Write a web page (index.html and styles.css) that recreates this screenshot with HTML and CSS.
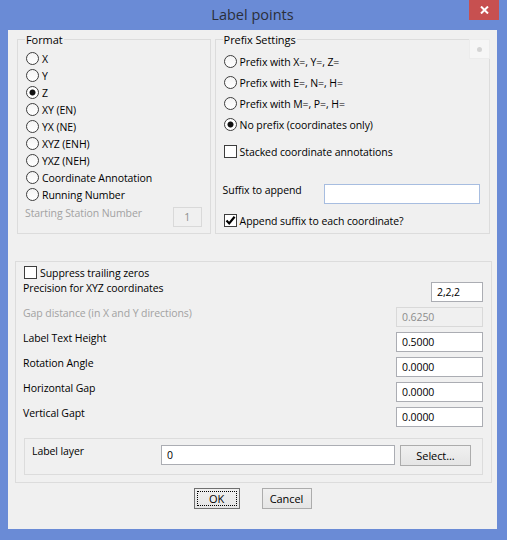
FILE: index.html
```html
<!DOCTYPE html>
<html>
<head>
<meta charset="utf-8">
<title>Label points</title>
<link rel="stylesheet" href="styles.css">
</head>
<body>
<div class="window">
  <div class="titlebar">
    <span></span>
    <span class="title">Label points</span>
    <span class="close"><svg width="9" height="8" viewBox="0 0 9 8"><path d="M1 0.5 L8 7.5 M8 0.5 L1 7.5" stroke="#fff" stroke-width="2"/></svg></span>
  </div>
  <div class="client">
    <div class="toprow">
      <div class="group format">
        <div class="legend">Format</div>
        <div class="radios">
          <div class="radio"><span class="rb"></span>X</div>
          <div class="radio"><span class="rb"></span>Y</div>
          <div class="radio"><span class="rb on"></span>Z</div>
          <div class="radio"><span class="rb"></span>XY (EN)</div>
          <div class="radio"><span class="rb"></span>YX (NE)</div>
          <div class="radio"><span class="rb"></span>XYZ (ENH)</div>
          <div class="radio"><span class="rb"></span>YXZ (NEH)</div>
          <div class="radio"><span class="rb"></span>Coordinate Annotation</div>
          <div class="radio"><span class="rb"></span>Running Number</div>
        </div>
        <div class="station">
          <span class="lbl dis">Starting Station Number</span>
          <span class="input disabled station-input">1</span>
        </div>
      </div>
      <div class="group prefix">
        <div class="legend">Prefix Settings</div>
        <span class="corner"><span class="dot"></span></span>
        <div class="radios wide">
          <div class="radio"><span class="rb"></span>Prefix with X=, Y=, Z=</div>
          <div class="radio"><span class="rb"></span>Prefix with E=, N=, H=</div>
          <div class="radio"><span class="rb"></span>Prefix with M=, P=, H=</div>
          <div class="radio"><span class="rb on"></span>No prefix (coordinates only)</div>
        </div>
        <div class="check stacked"><span class="cb"></span>Stacked coordinate annotations</div>
        <div class="suffix">
          <span class="lbl">Suffix to append</span>
          <span class="input focus-input suffix-input"></span>
        </div>
        <div class="check append"><span class="cb"><svg width="11" height="11" viewBox="0 0 11 11"><path d="M1.5 5.5 L4.2 8.4 L9.6 1.8" fill="none" stroke="#000" stroke-width="2.2"/></svg></span>Append suffix to each coordinate?</div>
      </div>
    </div>

    <div class="group params">
      <div class="check suppress"><span class="cb"></span>Suppress trailing zeros</div>
      <div class="rows">
        <span class="lbl">Precision for XYZ coordinates</span>
        <span class="input narrow">2,2,2</span>
        <span class="lbl dis">Gap distance (in X and Y directions)</span>
        <span class="input disabled">0.6250</span>
        <span class="lbl">Label Text Height</span>
        <span class="input">0.5000</span>
        <span class="lbl">Rotation Angle</span>
        <span class="input">0.0000</span>
        <span class="lbl">Horizontal Gap</span>
        <span class="input">0.0000</span>
        <span class="lbl">Vertical Gapt</span>
        <span class="input">0.0000</span>
      </div>
      <div class="layerbox">
        <span class="lbl">Label layer</span>
        <span class="input">0</span>
        <span class="btn select">Select...</span>
      </div>
    </div>

    <div class="buttons">
      <span class="btn ok"><span class="focusring">OK</span></span>
      <span class="btn cancel">Cancel</span>
    </div>
  </div>
</div>
</body>
</html>
```

FILE: styles.css
```css
* { box-sizing: border-box; }

html, body {
  margin: 0;
  padding: 0;
  background: #6a8bd6;
}

body {
  font-family: "Open Sans", "Noto Sans", sans-serif;
  font-size: 10.5px;
  letter-spacing: -0.08px;
  color: #000;
}

.window {
  width: 507px;
  height: 540px;
  background: #6a8bd6;
  padding: 0 10px 11px 8px;
  display: flex;
  flex-direction: column;
}

.titlebar {
  height: 30px;
  flex: none;
  display: grid;
  grid-template-columns: 1fr auto 1fr;
  align-items: center;
}

.title {
  font-size: 14.5px;
  letter-spacing: 0;
  color: #2a2f3a;
  line-height: 30px;
}

.close {
  justify-self: end;
  align-self: start;
  width: 30px;
  height: 20px;
  margin-right: -2px;
  background: #c75050;
  display: flex;
  align-items: center;
  justify-content: center;
}

.close svg { display: block; }

.client {
  flex: 1;
  background: #f0f0f0;
  padding: 9px 7px 0 7px;
  display: flex;
  flex-direction: column;
}

.toprow {
  display: flex;
  gap: 4px;
  margin-left: 2px;
}

.group {
  border: 1px solid #dcdcdc;
  position: relative;
}

.legend {
  height: 16px;
  line-height: 16px;
  margin-top: -8px;
  margin-left: -1px;
  padding: 0 1px;
  width: fit-content;
  background: #f0f0f0;
  font-size: 11px;
}

.format {
  width: 194px;
  height: 195px;
  padding: 0 8px;
}

.prefix {
  width: 276px;
  height: 195px;
  padding: 0 9px 0 8px;
}

.radios {
  margin-top: 2px;
  display: flex;
  flex-direction: column;
}

.radios.wide { margin-top: 3px; }

.radio, .check {
  display: flex;
  align-items: center;
  height: 17px;
  white-space: nowrap;
}

.radios.wide .radio { height: 21px; }

.rb {
  width: 13px;
  height: 13px;
  border: 1px solid #3d3d3d;
  border-radius: 50%;
  background: linear-gradient(#f4f4f4, #ffffff);
  margin-right: 3px;
  flex: none;
}

.rb.on {
  background: radial-gradient(circle, #111 0, #111 2.6px, #fff 3.4px);
}

.cb {
  width: 13px;
  height: 13px;
  border: 1px solid #3d3d3d;
  background: #fff;
  margin-right: 3px;
  flex: none;
  display: flex;
  align-items: center;
  justify-content: center;
}

.cb svg { display: block; }

.lbl {
  line-height: 13px;
  white-space: nowrap;
}

.dis { color: #a2a2a2; }

.station {
  margin-top: 4px;
  display: flex;
  align-items: flex-start;
  justify-content: space-between;
}

.station .lbl { margin-left: -1px; }

.input {
  height: 20px;
  border: 1px solid #abadb3;
  background: #fff;
  padding: 0 5px;
  line-height: 18px;
  white-space: nowrap;
  display: block;
}

.input.disabled {
  border-color: #d9d9d9;
  background: #f0f0f0;
  color: #8d8d8d;
}

.station-input {
  width: 29px;
  text-align: center;
}

.corner {
  position: absolute;
  top: -1px;
  right: -1px;
  width: 21px;
  height: 20px;
  background: #f6f6f6;
  border: 1px solid #ececec;
  display: flex;
  align-items: center;
  justify-content: center;
}

.corner .dot {
  width: 5px;
  height: 5px;
  border-radius: 50%;
  background: #d4d4d4;
}

.stacked { margin-top: 8px; }

.suffix {
  margin-top: 24px;
  display: flex;
  align-items: flex-start;
  justify-content: space-between;
}

.suffix .lbl { margin-left: -1px; }

.focus-input { border-color: #a7bde0; }

.suffix-input { width: 156px; }

.append { margin-top: 8px; }

.params {
  margin-top: 27px;
  width: 477px;
  height: 222px;
  padding: 0 8px 7px 8px;
  display: flex;
  flex-direction: column;
}

.suppress { margin-top: 2px; }

.rows {
  margin-top: 1px;
  display: grid;
  grid-template-columns: 1fr auto;
  grid-auto-rows: 20px;
  row-gap: 5px;
}

.rows .lbl {
  margin-left: -1px;
  align-self: start;
}

.rows .input {
  width: 87px;
  justify-self: end;
}

.rows .input.narrow { width: 52px; }

.layerbox {
  margin-top: 11px;
  height: 37px;
  border: 1px solid #dcdcdc;
  padding: 6px 11px 0 7px;
  display: grid;
  grid-template-columns: 129px 234px 1fr;
  column-gap: 0;
  align-items: start;
}

.btn {
  height: 21px;
  border: 1px solid #acacac;
  background: linear-gradient(#f0f0f0, #e5e5e5);
  display: flex;
  align-items: center;
  justify-content: center;
  font-size: 11px;
}

.select {
  margin-left: 5px;
  height: 21px;
}

.buttons {
  margin-top: 5px;
  display: flex;
  justify-content: center;
  gap: 22px;
}

.ok {
  width: 46px;
  border-color: #707070;
  padding: 2px;
}

.focusring {
  width: 100%;
  height: 100%;
  border: 1px dotted #000;
  display: flex;
  align-items: center;
  justify-content: center;
}

.cancel { width: 50px; }
```
